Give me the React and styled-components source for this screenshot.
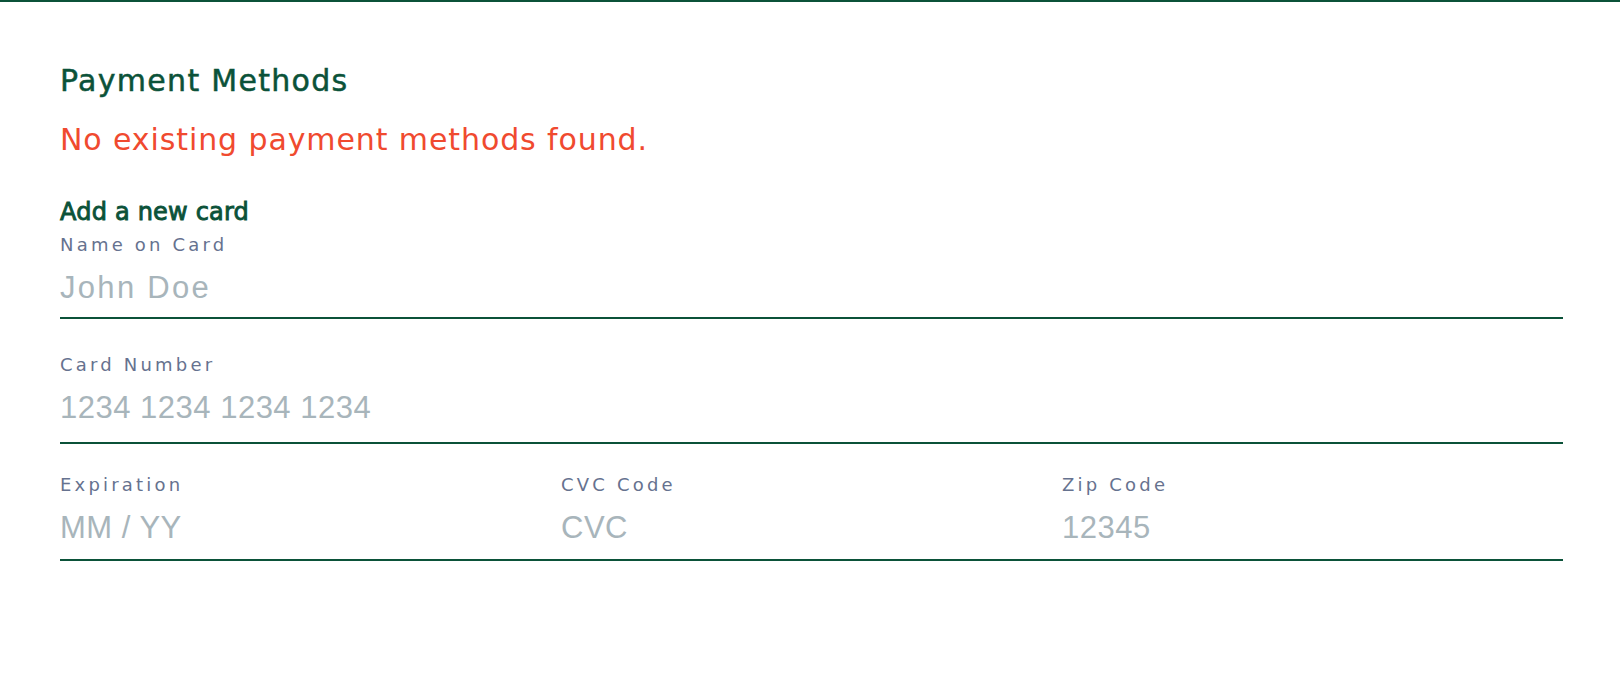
import styled, { createGlobalStyle } from "styled-components";

const colors = {
  green: "#0b5239",
  red: "#f04a2f",
  label: "#66728f",
  placeholder: "#a8b5bb",
};

const GlobalStyle = createGlobalStyle`
  html, body {
    margin: 0;
    padding: 0;
    background: #ffffff;
  }

  body {
    font-family: "DejaVu Sans", "Noto Sans", sans-serif;
  }

  * {
    box-sizing: border-box;
  }
`;

const Page = styled.main`
  min-height: 676px;
  padding: 56px 57px 0 60px;

  border-top: 2px solid ${colors.green};
`;

const Title = styled.h2`
  margin: 0;

  font-size: 30px;
  font-weight: 400;
  line-height: 45px;
  letter-spacing: 1.3px;
  color: ${colors.green};
  -webkit-text-stroke: 0.5px ${colors.green};
`;

const Empty = styled.p`
  margin: 14px 0 0 0;

  font-size: 30px;
  font-weight: 400;
  line-height: 45px;
  letter-spacing: 0.9px;
  color: ${colors.red};
`;

const Subtitle = styled.h3`
  margin: 32px 0 1px 0;

  font-size: 24px;
  font-weight: 400;
  line-height: 36px;
  letter-spacing: 0.2px;
  color: ${colors.green};
  -webkit-text-stroke: 0.9px ${colors.green};
`;

const Form = styled.form`
  display: flex;
  flex-direction: column;
`;

const Group = styled.div`
  display: grid;
  grid-template-columns: ${({ $cols }) => `repeat(${$cols || 1}, 1fr)`};
  margin-top: ${({ $top }) => $top || 0}px;
  padding-bottom: ${({ $pad }) => $pad || 7}px;

  border-bottom: 2px solid ${colors.green};
`;

const Field = styled.label`
  display: flex;
  flex-direction: column;
`;

const Label = styled.span`
  font-size: 18px;
  line-height: 27px;
  letter-spacing: 3.2px;
  color: ${colors.label};
`;

const Input = styled.input`
  display: block;
  width: 100%;
  height: 46px;
  margin-top: 7px;
  padding: 0;

  border: none;
  outline: none;
  background: transparent;

  font-family: "Liberation Sans", Arial, sans-serif;
  font-size: 31px;
  letter-spacing: ${({ $spacing }) => $spacing ?? 0.5}px;
  color: #333;

  &::placeholder {
    color: ${colors.placeholder};
    opacity: 1;
  }
`;

const CardField = ({ label, placeholder, spacing }) => (
  <Field>
    <Label>{label}</Label>
    <Input type="text" placeholder={placeholder} $spacing={spacing} />
  </Field>
);

const App = () => {
  return (
    <>
      <GlobalStyle />
      <Page>
        <Title>Payment Methods</Title>
        <Empty>No existing payment methods found.</Empty>
        <Subtitle>Add a new card</Subtitle>
        <Form onSubmit={(e) => e.preventDefault()}>
          <Group $pad={6}>
            <CardField label="Name on Card" placeholder="John Doe" spacing={2.3} />
          </Group>
          <Group $top={32} $pad={11}>
            <CardField label="Card Number" placeholder="1234 1234 1234 1234" />
          </Group>
          <Group $top={27} $pad={8} $cols={3}>
            <CardField label="Expiration" placeholder="MM / YY" />
            <CardField label="CVC Code" placeholder="CVC" />
            <CardField label="Zip Code" placeholder="12345" />
          </Group>
        </Form>
      </Page>
    </>
  );
};

export default App;
